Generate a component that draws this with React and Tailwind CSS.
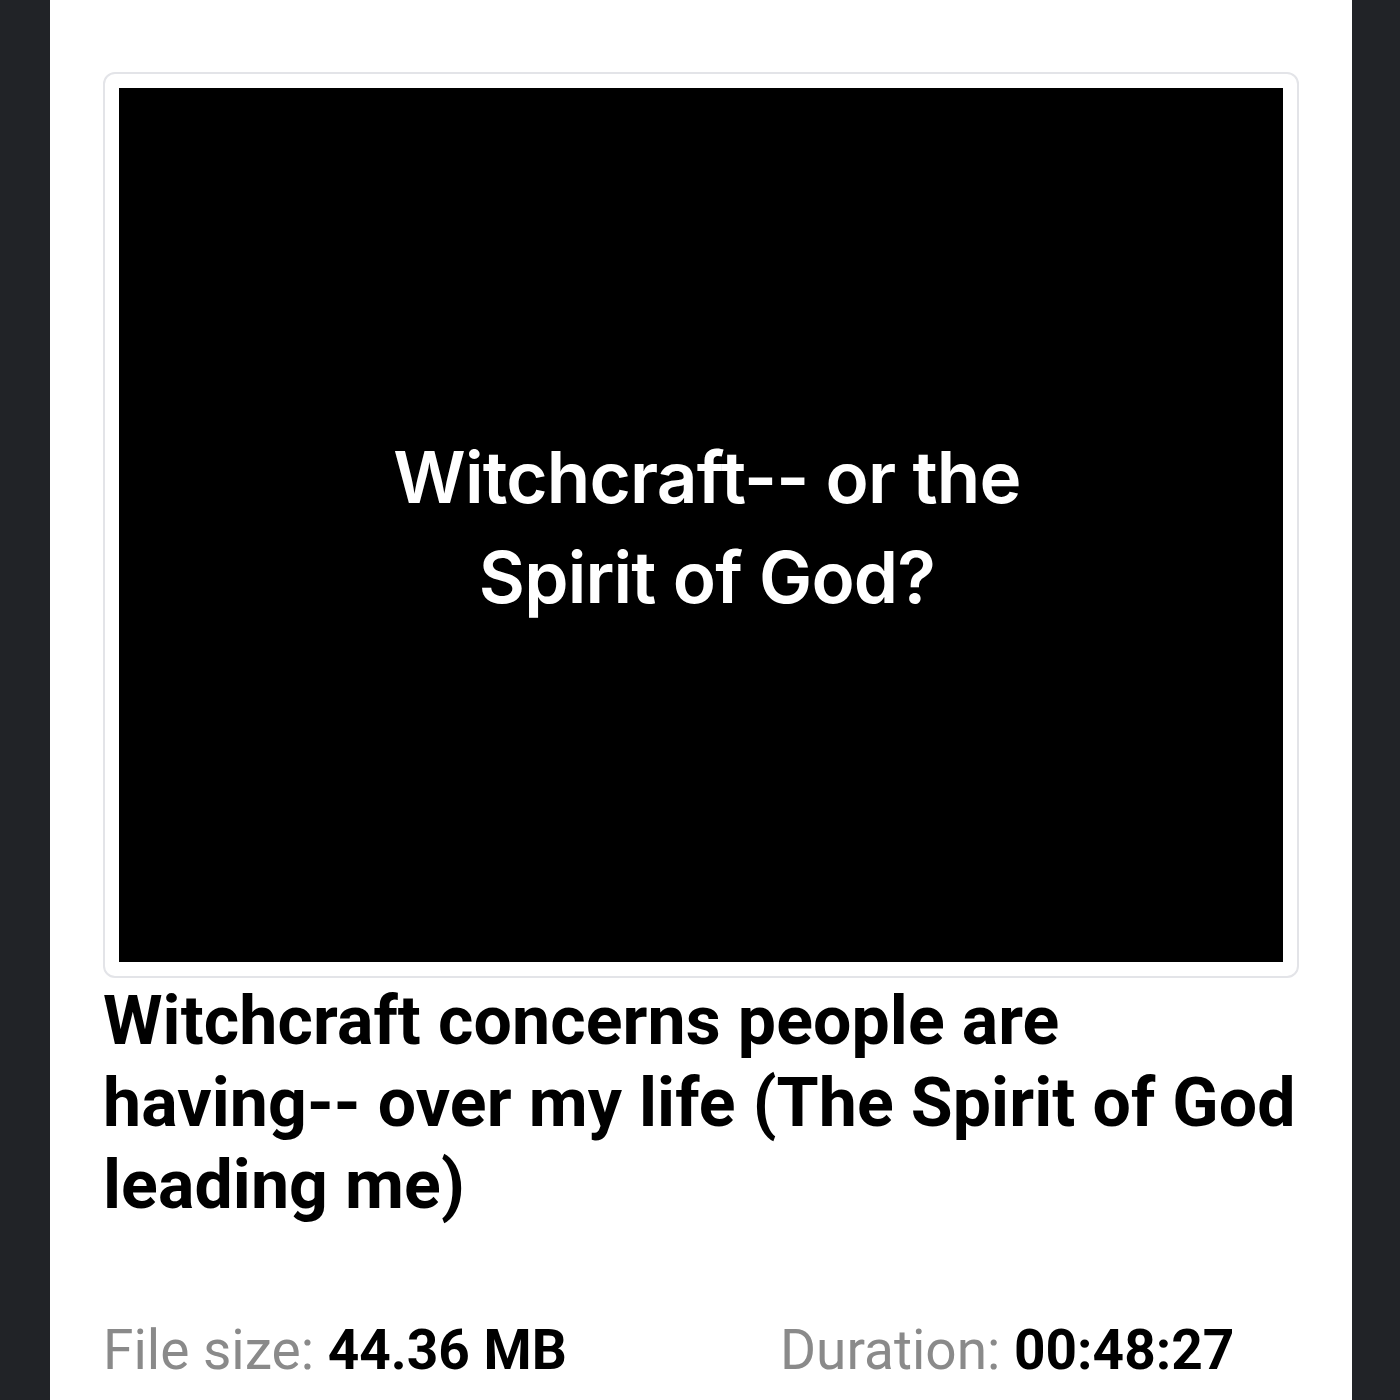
export default function App() {
  return (
    <div className="w-[1400px] h-[1400px] bg-[#212327] flex overflow-hidden">
      <div className="ml-[50px] w-[1302px] h-full bg-white pl-[53px] pr-[53px] pt-[72px]">
        <div className="rounded-[12px] border-2 border-[#e3e4e8] p-[14px]">
          <div className="h-[874px] bg-black flex items-center justify-center">
            <div
              className="text-white text-center text-[71px] leading-[100px] font-semibold tracking-[-0.8px] pl-[12px] pt-[4px]"
              style={{ fontFamily: 'Inter, "Noto Sans", sans-serif' }}
            >
              Witchcraft-- or the
              <br />
              Spirit of God?
            </div>
          </div>
        </div>
        <h1
          className="mt-[2px] text-[68px] leading-[82px] font-bold text-black tracking-[0.1px]"
          style={{ fontFamily: 'Roboto, "Liberation Sans", sans-serif' }}
        >
          Witchcraft concerns people are having-- over my life (The Spirit of God leading me)
        </h1>
        <div
          className="mt-[92px] flex text-[55px] leading-[64px]"
          style={{ fontFamily: 'Roboto, "Liberation Sans", sans-serif' }}
        >
          <div className="w-[677px]">
            <span className="text-[#8a8a8a]">File size: </span>
            <span className="font-bold text-black">44.36 MB</span>
          </div>
          <div>
            <span className="text-[#8a8a8a]">Duration: </span>
            <span className="font-bold text-black">00:48:27</span>
          </div>
        </div>
      </div>
    </div>
  );
}
